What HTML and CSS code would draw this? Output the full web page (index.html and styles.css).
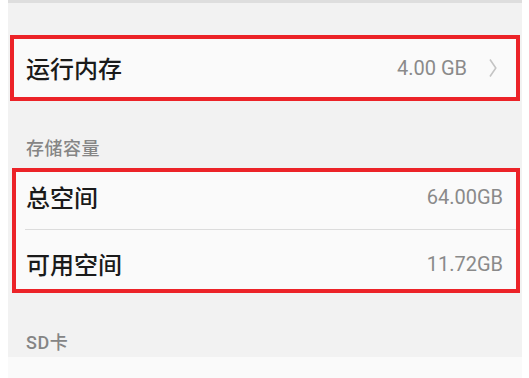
FILE: index.html
```html
<!DOCTYPE html>
<html lang="zh-CN">
<head>
<meta charset="utf-8">
<title>存储</title>
<link rel="stylesheet" href="styles.css">
</head>
<body>
<div class="screen">
  <div class="box box-ram">
    <div class="row row-ram">
      <span class="title">运行内存</span>
      <span class="value">4.00 GB</span>
      <svg class="chev" width="8" height="20" viewBox="0 0 8 20"><path d="M1 1.5 L6.8 10 L1 18.5" fill="none" stroke="#c4c4c4" stroke-width="1.6"/></svg>
    </div>
  </div>
  <div class="header header-storage">存储容量</div>
  <div class="box box-storage">
    <div class="row row-a">
      <span class="title">总空间</span>
      <span class="value">64.00GB</span>
    </div>
    <div class="sep"></div>
    <div class="row row-b">
      <span class="title">可用空间</span>
      <span class="value">11.72GB</span>
    </div>
  </div>
  <div class="header header-sd">SD卡</div>
  <div class="bottom-row"></div>
</div>
</body>
</html>
```

FILE: styles.css
```css
html, body {
  margin: 0;
  padding: 0;
  background: #ffffff;
}
body {
  font-family: "Noto Sans CJK SC", "Noto Sans", Roboto, sans-serif;
}
.screen {
  margin-left: 8px;
  width: 514px;
  height: 375px;
  background: #f2f2f2;
  border-top: 3px solid #dedede;
  display: flex;
  flex-direction: column;
  overflow: hidden;
}
.box {
  border: 4px solid #ec2328;
  background: #fafafa;
}
.box-ram {
  margin: 32px 2px 0 2px;
}
.box-storage {
  margin: 0 2px 0 4px;
}
.row {
  display: flex;
  align-items: center;
  box-sizing: border-box;
}
.row-ram {
  height: 58px;
  padding: 0 19px 0 12px;
}
.row-a {
  height: 57px;
  padding: 0 13px 7px 10px;
}
.row-b {
  height: 59px;
  padding: 9px 13px 0 10px;
}
.title {
  flex: 1;
  font-size: 24px;
  font-weight: 500;
  line-height: 30px;
  color: #1a1a1a;
}
.value {
  font-family: Roboto, "Noto Sans", sans-serif;
  font-size: 20px;
  line-height: 24px;
  color: #8a8a8a;
}
.chev {
  margin-left: 22px;
  display: block;
}
.sep {
  height: 1px;
  background: #dcdcdc;
  margin-left: 9px;
}
.header {
  font-size: 18px;
  font-weight: 500;
  line-height: 24px;
  color: #858585;
  padding-left: 18px;
  letter-spacing: 0.5px;
}
.header-storage {
  padding-top: 34px;
  padding-bottom: 9px;
}
.header-sd {
  font-family: Roboto, "Noto Sans CJK SC", sans-serif;
  padding-top: 38px;
  padding-bottom: 2px;
}
.bottom-row {
  flex: 1;
  background: #fafafa;
}
```
